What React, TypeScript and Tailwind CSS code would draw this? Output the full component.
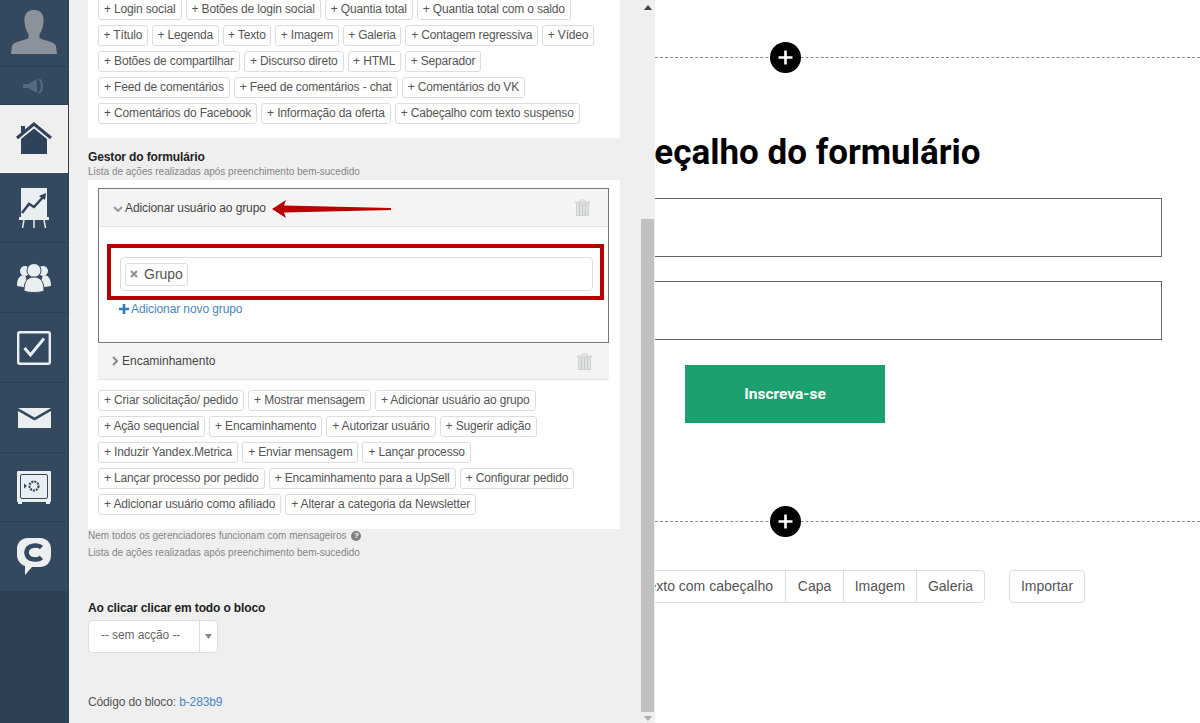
const topChips = [
  ['Login social', 'Botões de login social', 'Quantia total', 'Quantia total com o saldo'],
  ['Título', 'Legenda', 'Texto', 'Imagem', 'Galeria', 'Contagem regressiva', 'Vídeo'],
  ['Botões de compartilhar', 'Discurso direto', 'HTML', 'Separador'],
  ['Feed de comentários', 'Feed de comentários - chat', 'Comentários do VK'],
  ['Comentários do Facebook', 'Informação da oferta', 'Cabeçalho com texto suspenso'],
];

const actionChips = [
  ['Criar solicitação/ pedido', 'Mostrar mensagem', 'Adicionar usuário ao grupo'],
  ['Ação sequencial', 'Encaminhamento', 'Autorizar usuário', 'Sugerir adição'],
  ['Induzir Yandex.Metrica', 'Enviar mensagem', 'Lançar processo'],
  ['Lançar processo por pedido', 'Encaminhamento para a UpSell', 'Configurar pedido'],
  ['Adicionar usuário como afiliado', 'Alterar a categoria da Newsletter'],
];

function Chips({ rows }: { rows: string[][] }) {
  return (
    <div className="flex flex-col gap-y-[5px]">
      {rows.map((row) => (
        <div key={row[0]} className="flex gap-x-[4px]">
          {row.map((t) => (
            <span key={t} className={`h-[21px] leading-[19px] border border-[#dddddd] rounded-[3px] bg-white text-[12px] tracking-[-0.16px] text-[#555555] whitespace-nowrap ${t.length < 8 ? 'px-[4.5px]' : 'px-[5px]'}`}>
              + {t}
            </span>
          ))}
        </div>
      ))}
    </div>
  );
}

function Trash() {
  return (
    <svg width="15" height="17" viewBox="0 0 15 17" fill="none">
      <path d="M5 2.5 V1 H10 V2.5" stroke="#d0d0d0" />
      <rect x="0" y="2.5" width="15" height="2" fill="#d4d4d4" />
      <path d="M1.5 5 H13.5 V16.5 H1.5 Z" fill="#dde3e3" stroke="#d0d0d0" />
      <path d="M4.5 5.5 V16 M7.5 5.5 V16 M10.5 5.5 V16" stroke="#c8c8c8" />
    </svg>
  );
}

function AddLine() {
  return (
    <div className="h-0 border-t border-dashed border-[#8a8a8a] flex items-center">
      <div className="ml-[115px] -mt-[2px] w-[31px] h-[31px] rounded-full bg-black flex items-center justify-center shrink-0">
        <svg width="15" height="15" viewBox="0 0 15 15">
          <path d="M7.5 0.5 V14.5 M0.5 7.5 H14.5" stroke="#fff" strokeWidth="2.6" />
        </svg>
      </div>
    </div>
  );
}

function NavItem({ h, active, children }: { h: string; active?: boolean; children: React.ReactNode }) {
  return (
    <div className={`${h} flex items-center justify-center border-b ${active ? 'bg-[#efefef] border-white' : 'bg-[#34495f] border-[#2c3f55]'}`}>
      {children}
    </div>
  );
}

function Sidebar() {
  return (
    <aside className="w-[69px] shrink-0 h-full flex flex-col bg-[#2d3f52] border-r border-[#2c3f55]">
      <NavItem h="h-[67px]">
        <svg width="46" height="46" viewBox="0 0 46 46">
          <path d="M23 0 C31 0 33 6 32.5 12 C32 17 31 21 28.5 24 L28.5 28 C33 31 43 31 45 36 L46 44 H0 L1 36 C3 31 13 31 17.5 28 L17.5 24 C15 21 14 17 13.5 12 C13 6 15 0 23 0 Z" fill="#8b929b" />
        </svg>
      </NavItem>
      <NavItem h="h-[38px]">
        <svg width="22" height="16" viewBox="0 0 22 16">
          <path d="M0 6 H5 L14 1 V15 L5 10 H0 Z" fill="#546a80" />
          <path d="M16 1 C20 4 20 12 16 15" stroke="#546a80" strokeWidth="2" fill="none" />
        </svg>
      </NavItem>
      <NavItem h="h-[68px]" active>
        <svg width="36" height="33" viewBox="0 0 36 33">
          <path d="M1 16 L18 2 L35 16" stroke="#2f4259" strokeWidth="3" fill="none" />
          <path d="M5 4 H9 V8 L5 11 Z" fill="#2f4259" />
          <path d="M5 17 L18 6.5 L31 17 V32 H5 Z" fill="#2f4259" />
        </svg>
      </NavItem>
      <NavItem h="h-[70px]">
        <svg width="30" height="40" viewBox="0 0 30 40">
          <rect x="2" y="0" width="26" height="29" fill="#e9eef0" />
          <path d="M3 25 L10 16 L15 19 L25 8" stroke="#2f4259" strokeWidth="2.5" fill="none" />
          <path d="M27 5 L26 12 L20 8 Z" fill="#2f4259" />
          <rect x="0" y="29" width="30" height="3" fill="#e9eef0" />
          <path d="M5 32 L3.5 40 M15 32 V40 M25 32 L26.5 40" stroke="#e9eef0" strokeWidth="1.5" />
        </svg>
      </NavItem>
      <NavItem h="h-[70px]">
        <svg width="34" height="30" viewBox="0 0 34 30">
          <circle cx="8" cy="8" r="5" fill="#e9eef0" />
          <circle cx="26" cy="8" r="5" fill="#e9eef0" />
          <path d="M0 23 C0 15 3 12 8 12 L12 25 Z M34 23 C34 15 31 12 26 12 L22 25 Z" fill="#e9eef0" />
          <circle cx="17" cy="7.5" r="7" fill="#e9eef0" stroke="#34495f" />
          <path d="M7 28 C7 19 10 14 17 14 C24 14 27 19 27 28 C22 30 12 30 7 28 Z" fill="#e9eef0" stroke="#34495f" />
        </svg>
      </NavItem>
      <NavItem h="h-[70px]">
        <svg width="34" height="34" viewBox="0 0 34 34">
          <rect x="1.2" y="1.2" width="31.6" height="31.6" rx="1.5" fill="none" stroke="#e9eef0" strokeWidth="2.4" />
          <path d="M7.5 17 L13.5 24 L27 7.5" stroke="#e9eef0" strokeWidth="3" fill="none" />
        </svg>
      </NavItem>
      <NavItem h="h-[70px]">
        <svg width="33" height="20" viewBox="0 0 33 20">
          <path d="M0 0 H33 L16.5 9.5 Z" fill="#e9eef0" />
          <path d="M0 3 L16.5 12.5 L33 3 V20 H0 Z" fill="#e9eef0" />
        </svg>
      </NavItem>
      <NavItem h="h-[69px]">
        <svg width="34" height="33" viewBox="0 0 34 33">
          <path d="M1 0 H33 Q34 0 34 1 V30 Q34 31 33 31 V33 H29 V31 H5 V33 H1 V31 Q0 31 0 30 V1 Q0 0 1 0 Z" fill="#e9eef0" />
          <rect x="3.5" y="3.5" width="27" height="24" rx="1.5" fill="none" stroke="#34495f" />
          <circle cx="17" cy="15" r="4.5" fill="none" stroke="#34495f" strokeWidth="2.2" strokeDasharray="2 1" />
          <path d="M7 12.5 L10 15 L7 17.5 Z" fill="#34495f" />
        </svg>
      </NavItem>
      <NavItem h="h-[70px]">
        <svg width="34" height="37" viewBox="0 0 34 37">
          <path d="M11 0 H23 C30 0 34 5 34 11 V17 C34 24 30 29 23 29 H15 L8 37 L8 28 C3 26 0 22 0 17 V11 C0 5 4 0 11 0 Z" fill="#eceeef" />
          <path d="M24.5 9.5 C22 7 10 5.5 9.5 14.5 C10 23.5 22 22 24.5 19.5" fill="none" stroke="#34495f" strokeWidth="4.6" />
        </svg>
      </NavItem>
    </aside>
  );
}

function Panel() {
  return (
    <div className="w-[586px] shrink-0 h-full bg-[#efefef] flex z-10 relative overflow-hidden">
      <div className="w-[571px] shrink-0 pl-[19px] font-['Liberation_Sans',sans-serif]">
        <section className="w-[532px] h-[139px] bg-white pl-[10px] -mt-px">
          <Chips rows={topChips} />
        </section>

        <h3 className="mt-[12px] text-[12px] leading-[14px] font-bold tracking-[-0.13px] text-[#222222]">Gestor do formulário</h3>
        <p className="mt-[1px] text-[10px] leading-[14px] text-[#858585]">Lista de ações realizadas após preenchimento bem-sucedido</p>

        <section className="mt-[1px] w-[532px] h-[349px] bg-white px-[10px] pt-[8px]">
          <div className="w-[511px] h-[155px] border border-[#777777] flex flex-col">
            <div className="relative h-[38px] shrink-0 bg-[#f4f4f4] border-b border-[#e4e4e4] flex items-center pl-[14px] pr-[18px]">
              <svg width="10" height="6" viewBox="0 0 10 6" className="mr-[2px] mt-[2px]">
                <path d="M1 1 L5 5 L9 1" fill="none" stroke="#999999" strokeWidth="2" />
              </svg>
              <span className="text-[12px] tracking-[-0.1px] text-[#444444]">Adicionar usuário ao grupo</span>
              <span className="ml-auto"><Trash /></span>
              <svg width="120" height="18" viewBox="0 0 120 18" className="absolute left-[173px] top-[11px]">
                <path d="M0 9 L14 0 L12 5.5 L119 8 V10 L12 12.5 L14 18 Z" fill="#b80000" />
              </svg>
            </div>
            <div className="ml-[8px] mr-[4px] mt-[17px] h-[56px] border-[4px] border-[#b80000] pl-[9px] pr-[7px] pt-[9px] shrink-0">
              <div className="h-[34px] border border-[#dddddd] rounded-[4px] px-[4px] flex items-center">
                <span className="h-[23px] px-[4px] border border-[#dddddd] rounded-[3px] flex items-center gap-[6px] text-[14px] text-[#555555]">
                  <svg width="8" height="8" viewBox="0 0 8 8">
                    <path d="M1 1 L7 7 M7 1 L1 7" stroke="#999999" strokeWidth="2.4" />
                  </svg>
                  Grupo
                </span>
              </div>
            </div>
            <div className="ml-[20px] flex items-center gap-[2px] text-[12px] tracking-[-0.1px] text-[#4a86bd]">
              <svg width="10" height="10" viewBox="0 0 10 10">
                <path d="M5 0 V10 M0 5 H10" stroke="#337ab7" strokeWidth="2.6" />
              </svg>
              Adicionar novo grupo
            </div>
          </div>
          <div className="w-[511px] h-[37px] bg-[#f4f4f4] border-b border-[#e4e4e4] flex items-center pl-[14px] pr-[17px]">
            <svg width="6" height="10" viewBox="0 0 6 10" className="mr-[4px]">
              <path d="M1 1 L5 5 L1 9" fill="none" stroke="#888888" strokeWidth="2" />
            </svg>
            <span className="text-[12px] text-[#444444]">Encaminhamento</span>
            <span className="ml-auto"><Trash /></span>
          </div>
          <div className="mt-[10px]">
            <Chips rows={actionChips} />
          </div>
        </section>

        <p className="text-[10px] leading-[14px] text-[#858585] flex items-center gap-[5px]">
          Nem todos os gerenciadores funcionam com mensageiros
          <span className="w-[10px] h-[10px] rounded-full bg-[#808080] text-white text-[8px] leading-[10px] text-center font-bold">?</span>
        </p>
        <p className="mt-[3px] text-[10px] leading-[14px] text-[#858585]">Lista de ações realizadas após preenchimento bem-sucedido</p>

        <h3 className="mt-[41px] text-[12px] leading-[14px] font-bold tracking-[-0.13px] text-[#222222]">Ao clicar clicar em todo o bloco</h3>
        <div className="mt-[5px] w-[130px] h-[33px] bg-white border border-[#dddddd] rounded-[4px] flex text-[12px] tracking-[-0.1px] text-[#666666]">
          <span className="flex-1 pl-[12px] leading-[29px]">-- sem acção --</span>
          <span className="w-[18px] border-l border-[#dddddd] flex items-center justify-center">
            <svg width="7" height="5" viewBox="0 0 7 5"><path d="M0 0 H7 L3.5 5 Z" fill="#888888" /></svg>
          </span>
        </div>

        <p className="mt-[42px] text-[12px] leading-[14px] tracking-[-0.13px] text-[#555555]">
          Código do bloco: <span className="text-[#4a86bd]">b-283b9</span>
        </p>
      </div>

      <div className="w-[15px] shrink-0 flex flex-col items-center">
        <svg width="8" height="5" viewBox="0 0 8 5" className="mt-[5px]"><path d="M0 5 H8 L4 0 Z" fill="#444444" /></svg>
        <div className="mt-[209px] w-[13.5px] h-[493px] bg-[#c1c1c1]" />
        <svg width="8" height="5" viewBox="0 0 8 5" className="mt-[4px]"><path d="M0 0 H8 L4 5 Z" fill="#aaaaaa" /></svg>
      </div>
    </div>
  );
}

function Canvas() {
  return (
    <main className="flex-1 min-w-0 h-full bg-white overflow-hidden font-['Roboto',sans-serif]">
      <div className="pt-[57px]"><AddLine /></div>
      <h1 className="mt-[75px] -ml-[62px] text-[35px] leading-[40px] font-bold text-black whitespace-nowrap">Cabeçalho do formulário</h1>
      <div className="mt-[25px] -ml-[100px] mr-[38px] h-[59px] border border-[#666666]" />
      <div className="mt-[24px] -ml-[100px] mr-[38px] h-[59px] border border-[#666666]" />
      <button className="mt-[25px] ml-[30px] w-[200px] h-[58px] pt-[1px] bg-[#1ba06e] text-white text-[15.5px] font-bold block">Inscreva-se</button>
      <div className="mt-[98px]"><AddLine /></div>
      <div className="mt-[48px] -ml-[139px] flex font-['Liberation_Sans',sans-serif] text-[14px] text-[#555555]">
        <div className="flex h-[33px] border border-[#dddddd] rounded-[4px]">
          <span className="w-[269px] pr-[12px] text-right leading-[31px] border-r border-[#dddddd]">Texto com cabeçalho</span>
          <span className="w-[58px] text-center leading-[31px] border-r border-[#dddddd]">Capa</span>
          <span className="w-[73px] text-center leading-[31px] border-r border-[#dddddd]">Imagem</span>
          <span className="w-[67px] text-center leading-[31px]">Galeria</span>
        </div>
        <span className="ml-[24px] w-[76px] h-[33px] text-center leading-[31px] border border-[#dddddd] rounded-[4px]">Importar</span>
      </div>
    </main>
  );
}

export default function App() {
  return (
    <div className="w-[1200px] h-[723px] flex overflow-hidden bg-white">
      <Sidebar />
      <Panel />
      <Canvas />
    </div>
  );
}
